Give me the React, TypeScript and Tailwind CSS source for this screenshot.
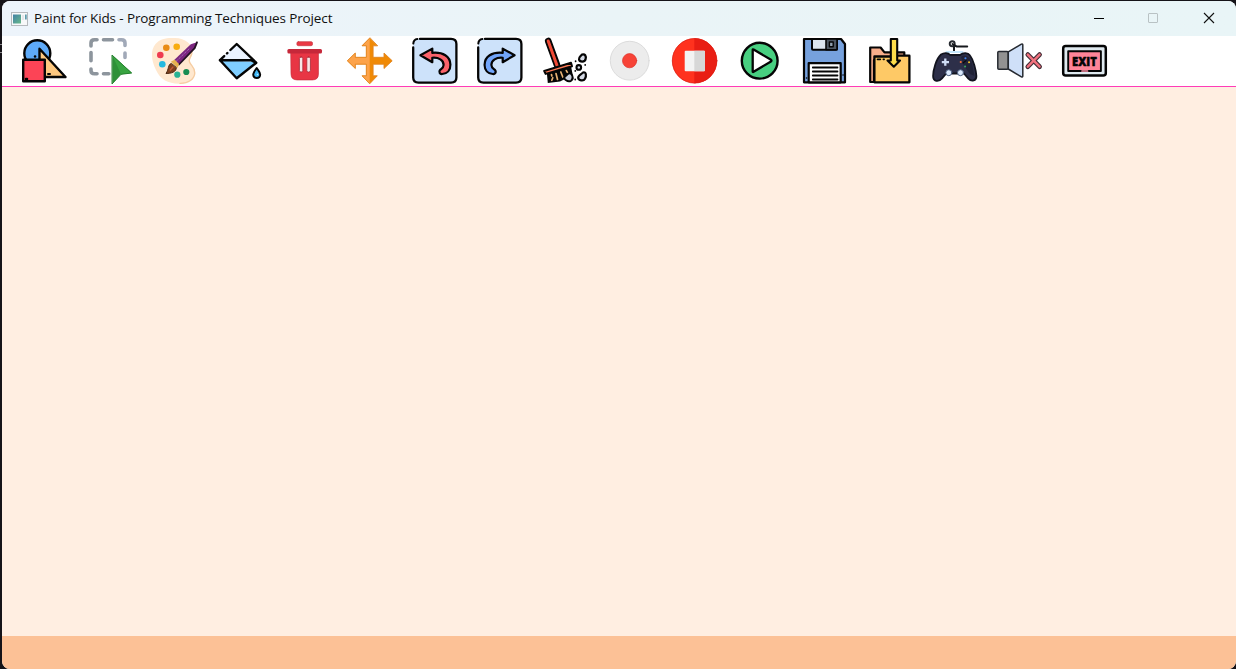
import type { ReactNode } from "react";

const K = "#050505";

function Icon({ label, children }: { label: string; children: ReactNode }) {
  return (
    <button type="button" aria-label={label} className="h-[50px] w-[65px] shrink-0">
      <svg viewBox="0 0 65 50" className="block h-[50px] w-[65px]" fill="none" strokeLinejoin="round" strokeLinecap="round">
        {children}
      </svg>
    </button>
  );
}

const turnArrow =
  "M30.3 12.6 L18.4 19.2 L30.3 26.2 L30.3 21.8 C36.5 21.2 41.8 24.2 41.6 29 C41.5 32 39.5 32.6 38 34 C36.4 36 38 38.4 40.2 38 C45 37.5 48.6 34 48.4 28.6 C48.2 20.5 41 15.8 30.3 16.8 Z";

function Shapes() {
  return (
    <Icon label="Shapes">
      <circle cx="25.3" cy="17.3" r="13" fill="#5eaaf8" stroke={K} strokeWidth="2.4" />
      <path d="M27.5 12.8 L53.5 41 H27.5 Z" fill="#fdc880" stroke={K} strokeWidth="2.4" />
      <path d="M36 38 h2" stroke={K} strokeWidth="2" />
      <rect x="11.2" y="23.8" width="21.6" height="21.4" fill="#fc4456" stroke={K} strokeWidth="2.4" />
      <path d="M14 43 h1 M23 20.5 h.1" stroke={K} strokeWidth="2.6" />
    </Icon>
  );
}

function Select() {
  return (
    <Icon label="Select">
      <g stroke="#8d959d" strokeWidth="3.6">
        <path d="M14 10 V7 Q14 3.7 17.5 3.7 H20 M26.5 3.7 H35.5 M14 16.5 V24.8 M14 33 V34.5 Q14 37.8 17.5 37.8 H20 M26.5 37.8 H31.8" />
        <path d="M42 3.7 H44.5 Q48 3.7 48 7 V9.5 M48 17 V21.5" stroke="#a1a9b8" />
      </g>
      <path d="M35.3 19.3 L54.7 37 L44 38.3 L35.3 47.7 Z" fill="#2e9138" />
      <path d="M35.3 19.3 L44 38.3 L54.7 37 Z" fill="#38a441" />
      <path d="M35.3 19.3 L54.7 37 L44 38.3 L35.3 47.7 Z" stroke="#25812e" strokeWidth="1" />
    </Icon>
  );
}

function Palette() {
  return (
    <Icon label="Drawing colour">
      <path d="M31 2 C42 1 51 8 50.5 16 C50.3 22 46 22 47.5 26 C49 30 53 31 52.8 37 C52.5 43 46.5 47.6 38 47.6 C27 48 18.5 44 14 34 C9 24 8.4 14 13.5 8 C18 3 24 1.8 31 2Z" fill="#ffe8cf" />
      <path d="M50 15 C50 22 46 22 47.5 26 C49 30 53 31 52.8 37 C52.5 43 46.5 47.6 38 47.4" stroke="#f6cda2" strokeWidth="1.4" />
      <circle cx="24.3" cy="11.7" r="3.3" fill="#e98b14" />
      <circle cx="34.7" cy="10.7" r="3.3" fill="#f8ac0f" />
      <circle cx="18.3" cy="19" r="3.3" fill="#ee3b50" />
      <circle cx="20.3" cy="28.3" r="3.3" fill="#26b9de" />
      <circle cx="35.3" cy="38.7" r="3.1" fill="#28b394" />
      <circle cx="44.3" cy="36" r="3.1" fill="#188d52" />
      <path d="M54.8 6.3 L48.8 8.2 L32.2 24 L36.5 29 L52.5 12.2 Z" fill="#7b267f" />
      <path d="M55 6.3 L52.7 12.2 L37 28.5" stroke="#241323" strokeWidth="1.8" />
      <path d="M34 25.5 L48 12" stroke="#a66ab7" strokeWidth="1" strokeDasharray="2 2" />
      <path d="M29 25.5 L35.5 32 L37 28 L32.8 23.8Z" fill="#e6b24f" />
      <path d="M29 27.5 C25.5 29 27.2 33 24 37.5 C29 37.5 34.5 36 34.3 31.8 Z" fill="#80401d" stroke="#4c2811" strokeWidth="1" />
      <path d="M28.3 34 L31 31" stroke="#c35a37" strokeWidth="1.3" />
    </Icon>
  );
}

function Fill() {
  return (
    <Icon label="Fill colour">
      <path d="M13 24.2 L29.7 8 L49.3 26.5 L29.7 42.2 Z" fill="#eaf3ff" />
      <path d="M13 24.2 L49.3 26 L29.7 42.2 Z" fill="#7fceff" />
      <path d="M29.7 42.2 L13 24.2 H44 L49.3 26.8 Z" stroke={K} strokeWidth="2.4" />
      <path d="M20 17.4 L20.4 17 M23.4 14 L29.7 8 L48.5 26" stroke={K} strokeWidth="2.4" />
      <path d="M13 24.2 L17.2 20.1" stroke={K} strokeWidth="2.4" />
      <path d="M49.7 32 C47.5 35 46.2 37 46.2 38.6 C46.2 41 48 42 49.8 42 C52 42 53.3 40.5 53.2 38.5 C53 36 51.5 35 49.7 32Z" fill="#43b7f4" stroke={K} strokeWidth="1.9" />
      <path d="M50.5 38.5 v.1" stroke="#c7efff" strokeWidth="1.5" />
    </Icon>
  );
}

function Trash() {
  return (
    <Icon label="Delete">
      <rect x="24.9" y="5.7" width="15.6" height="4" rx="1.4" fill="#eb3844" stroke="#c83b43" strokeWidth=".7" />
      <path d="M19 16 H46.4 V38 Q46.4 43.9 40.5 43.9 H25 Q19 43.9 19 38 Z" fill="#e83544" stroke="#c92b39" strokeWidth=".7" />
      <rect x="15.4" y="13" width="34.6" height="4.4" rx="1.5" fill="#c6283a" />
      <rect x="27.4" y="21" width="3.4" height="15" rx="1.6" fill="#f7e6e8" stroke="#a72836" strokeWidth=".8" />
      <rect x="34.8" y="21" width="3.6" height="15" rx="1.6" fill="#f7e6e8" stroke="#a72836" strokeWidth=".8" />
    </Icon>
  );
}

function Move() {
  return (
    <Icon label="Move">
      <path d="M32.7 2 L25 9.8 H29.3 V21.3 H18.3 V17 L10.3 24.8 L18.3 32.5 V28.2 H29.3 V39.8 H25 L32.7 47.8 L40.3 39.8 H36.1 V28.2 H47 V32.5 L55.2 24.8 L47 17 V21.3 H36.1 V9.8 H40.3 Z" fill="#f08a05" />
      <path d="M32.7 2 L25 9.8 H29.3 V21.3 H18.3 V17 L10.3 24.8 L18.3 32.5 V28.2 H29.3 V39.8 H25 L32.7 47.8 Z" fill="#fda34a" />
      <path d="M32.7 2 L25 9.8 H29.3 V21.3 H18.3 V17 L10.3 24.8 L18.3 32.5 V28.2 H29.3 V39.8 H25 L32.7 47.8 L40.3 39.8 H36.1 V28.2 H47 V32.5 L55.2 24.8 L47 17 V21.3 H36.1 V9.8 H40.3 Z" stroke="#e18520" strokeWidth=".9" />
    </Icon>
  );
}

function TurnTile() {
  return (
    <>
      <rect x="11.2" y="2.9" width="43.2" height="43.8" rx="5" fill="#cde2fa" />
      <path d="M18 2.9 H49 Q54.4 2.9 54.4 8 V41.6 Q54.4 46.7 49 46.7 H16.5 Q11.2 46.7 11.2 41.6 V11.5" stroke={K} strokeWidth="2.3" />
      <path d="M11.3 7.6 Q11.6 3.6 15.4 3.1" stroke={K} strokeWidth="2" />
    </>
  );
}

function Undo() {
  return (
    <Icon label="Undo">
      <TurnTile />
      <path d={turnArrow} fill="#fb626a" stroke={K} strokeWidth="2.2" />
    </Icon>
  );
}

function Redo() {
  return (
    <Icon label="Redo">
      <TurnTile />
      <g transform="translate(66 0) scale(-1 1)">
        <path d={turnArrow} fill="#71a5fa" stroke={K} strokeWidth="2.2" />
      </g>
    </Icon>
  );
}

function Broom() {
  return (
    <Icon label="Clear all">
      <path d="M16.2 5 L25 29" stroke={K} strokeWidth="6.6" />
      <path d="M16.2 5 L25.2 30" stroke="#f04a36" strokeWidth="3" />
      <path d="M14.8 36.5 L39 30 L41.5 43 L37 45 L33 43 L28 45.5 L15.8 47 Z" fill={K} />
      <path d="M19.5 38.5 l.3 1.5 M19.8 44.3 l1-2.6 M24 37.5 l1.5 6 M28.8 36 l2 5 M34.3 34.6 l1.2 2" stroke="#e8b173" strokeWidth="1.7" />
      <path d="M12.2 35 L39 26.8 L40 30.2 L13.6 37.9 Z" fill="#fa7854" stroke={K} strokeWidth="2" />
      <path d="M36.5 37.5 C40.5 36.5 42 43 39 44.8 C35.5 46.5 31.5 43 32.5 41Z" fill="#c9cedb" stroke={K} strokeWidth="1.9" />
      <path d="M50 18.5 C53 17.5 54.3 20 53.6 23 C53 26.5 47.5 26.3 47 23.3 C46.8 21 48.5 20.5 50 18.5Z" fill="#d5dae5" stroke={K} strokeWidth="2.2" />
      <circle cx="46.8" cy="31.4" r="2.3" fill="#d4d8e3" stroke={K} strokeWidth="2.1" />
      <path d="M51 36.5 C54.4 35.5 54.5 40 53 42.8 C51.5 45.5 46.5 44.5 46.2 41.8 C46 39.5 48.8 38.5 51 36.5Z" fill="#d5dae5" stroke={K} strokeWidth="2.2" />
      <path d="M43.6 25.2 v.1 M53.2 28.8 v.1 M43.3 34.8 v.1 M43.2 43.5 v.1" stroke={K} strokeWidth="1.8" />
    </Icon>
  );
}

function Record() {
  return (
    <Icon label="Start recording">
      <circle cx="32.7" cy="24.7" r="19.4" fill="#ececec" stroke="#dcdcdc" strokeWidth="1" />
      <circle cx="32.6" cy="24.7" r="7.1" fill="#f74337" stroke="#dd3028" strokeWidth=".7" />
    </Icon>
  );
}

function Stop() {
  return (
    <Icon label="Stop recording">
      <circle cx="32.6" cy="24.8" r="22.5" fill="#ff321e" />
      <path d="M32.3 2.3 A22.5 22.5 0 0 1 32.3 47.3 Z" fill="#e91e14" />
      <circle cx="32.6" cy="24.8" r="22.3" stroke="#d91e14" strokeWidth=".7" />
      <rect x="22.7" y="14.8" width="20.3" height="20.4" rx="1" fill="#f3f3f3" />
      <path d="M32.3 14.8 H42.2 Q43 14.8 43 15.8 V34.2 Q43 35.2 42 35.2 H32.3Z" fill="#d7d7d7" />
    </Icon>
  );
}

function Play() {
  return (
    <Icon label="Play recording">
      <circle cx="32.7" cy="24.7" r="17.9" fill="#48cf80" stroke={K} strokeWidth="2.4" />
      <path d="M25.7 13.8 Q25.7 13 26.6 13.5 L44 23.8 Q45 24.6 44 25.4 L26.6 35.8 Q25.7 36.3 25.7 35.4Z" fill="#fff" stroke={K} strokeWidth="2.3" />
    </Icon>
  );
}

function Save() {
  return (
    <Icon label="Save">
      <path d="M12 3 H49 L53 8 V46.3 H12 Z" fill="#76a1dd" stroke={K} strokeWidth="2.2" />
      <rect x="20" y="2.9" width="25" height="10.8" rx="1" fill="#dde5ee" stroke={K} strokeWidth="2" />
      <path d="M34 3 H45 V13.7 H34Z" fill="#4d5660" stroke={K} strokeWidth="1.6" />
      <rect x="37.4" y="6" width="3.8" height="4.8" fill="#91a0ae" stroke={K} strokeWidth="1.4" />
      <rect x="16.7" y="27.2" width="32" height="19.1" fill="#fff" stroke={K} strokeWidth="2.2" />
      <path d="M20.8 31.5 H45.5 M20.8 35.5 H45.5 M20.8 39.5 H45.5 M20.8 43.5 H45.5" stroke={K} strokeWidth="1.8" />
      <path d="M14.5 42 h.1 M51 39 h.1" stroke={K} strokeWidth="1.5" />
    </Icon>
  );
}

function Load() {
  return (
    <Icon label="Load">
      <path d="M13.2 46 V11.5 H23.6 L27.5 16.4 H47.3 V24 H17 V46 Z" fill="#f8ad8b" stroke={K} strokeWidth="2.2" />
      <path d="M17.4 46.3 V20.5 H36 L38 19.7 H52.4 V46.3 Z" fill="#fec966" stroke={K} strokeWidth="2.3" />
      <path d="M20.5 23.3 h2.8 M26.4 23.3 h.7" stroke={K} strokeWidth="1.7" />
      <path d="M33.8 3 H40.2 V24.5 H43 L36.8 30.7 L30.5 24.5 H33.8 Z" fill="#fedd4b" stroke={K} strokeWidth="2.1" />
    </Icon>
  );
}

function GameMode() {
  return (
    <Icon label="Play mode">
      <circle cx="30.2" cy="7.8" r="2.5" stroke="#26292f" strokeWidth="1.9" />
      <path d="M30.5 8 L34.5 10.4 H45.2 M32 11 V14.5" stroke="#16181c" strokeWidth="2" />
      <path d="M24.5 16 H40.5" stroke="#c5e7fc" strokeWidth="2" />
      <path d="M19 18.5 C22 16.5 26 16.5 28.2 19 H38 C41 16.5 46 16.5 48 19.5 C51.5 24 54 34 54.4 40 C54.5 45 49.5 46 46.4 42.7 L42 37.5 H24.2 L20 42.3 C16.5 46.3 11 45.7 11.1 40 C11.2 34 14 23 19 18.5Z" fill="#2d2f49" stroke="#12141f" strokeWidth="1.8" />
      <path d="M39 21 C42 18 48 20 50 27 L52.5 40 L48 38 L42 30Z" fill="#212338" />
      <path d="M23.3 22.5 V29.7 M19.8 26.2 H27" stroke="#cfdcf5" strokeWidth="2.3" strokeLinecap="butt" />
      <circle cx="26.8" cy="36.7" r="3" fill="#dceafd" stroke="#4c5f80" strokeWidth="1" />
      <circle cx="38.5" cy="36.7" r="3" fill="#dceafd" stroke="#4c5f80" strokeWidth="1" />
      <path d="M38.7 26 h.1" stroke="#fa7136" strokeWidth="2" />
      <path d="M43.4 22.3 h.1" stroke="#3f83ec" strokeWidth="2" />
      <path d="M47 26.3 h.1" stroke="#e9bd28" strokeWidth="2" />
      <path d="M43 30.6 h.1" stroke="#3aa45d" strokeWidth="2" />
      <path d="M41 27 l3-2.4" stroke="#08090d" strokeWidth="1.2" />
    </Icon>
  );
}

function Mute() {
  return (
    <Icon label="Mute">
      <rect x="10.8" y="15.6" width="10.4" height="17.6" rx="1" fill="#929292" stroke="#262a31" strokeWidth="1.5" />
      <path d="M21.3 15.8 L34.4 8.2 Q35.8 7.5 35.8 9 V40 Q35.8 41.5 34.4 40.8 L21.3 33 Z" fill="#cfe0f8" stroke="#262a31" strokeWidth="1.5" />
      <path d="M40.8 18.6 L52.6 30.7 M52.6 18.6 L40.8 30.7" stroke="#422d36" strokeWidth="4.7" />
      <path d="M40.8 18.6 L52.6 30.7 M52.6 18.6 L40.8 30.7" stroke="#f1717e" strokeWidth="2.4" />
    </Icon>
  );
}

function Exit() {
  return (
    <Icon label="Exit">
      <rect x="11.2" y="10.1" width="42.6" height="29.5" rx="2.5" fill="#dfe9ef" stroke={K} strokeWidth="2.5" />
      <rect x="16.2" y="15.2" width="32.7" height="19.8" fill="#ff8498" stroke={K} strokeWidth="1.9" />
      <text x="20" y="29.5" textLength="24.8" lengthAdjust="spacingAndGlyphs" fill={K} stroke={K} strokeWidth=".5" className="font-['Open_Sans',sans-serif] text-[13px] font-extrabold">EXIT</text>
      <path d="M30 35 h5.5" stroke="#ff8ea4" strokeWidth="1.7" />
    </Icon>
  );
}

function TitleBar() {
  return (
    <header className="flex h-[35px] shrink-0 items-center bg-linear-to-r from-[#edf4fb] via-[#eaf4f7] to-[#e9f5f7] pl-[9px]">
      <svg viewBox="0 0 17 14" className="h-[14px] w-[17px] shrink-0">
        <defs>
          <linearGradient id="app" x1="0" y1="0" x2="1" y2="1">
            <stop offset="0" stopColor="#4381a6" />
            <stop offset="1" stopColor="#67b98a" />
          </linearGradient>
        </defs>
        <rect x=".5" y=".5" width="16" height="13" fill="#f7f8f9" stroke="#b5b9bd" />
        <rect x="2" y="2.5" width="8" height="9" fill="url(#app)" />
        <path d="M11 3 H13 V8 H11Z" fill="#e4e7e9" />
        <rect x="14" y="2.5" width="1.7" height="5" fill="#5c9aab" />
      </svg>
      <h1 className="ml-[6px] flex-1 pb-px font-['Open_Sans',sans-serif] text-[13.5px] leading-[20px] tracking-[-0.125px] whitespace-nowrap text-[#101010]">
        Paint for Kids - Programming Techniques Project
      </h1>
      <div className="flex items-center">
        <button type="button" aria-label="Minimize" className="grid h-[35px] w-[54px] place-items-center pb-px">
          <svg viewBox="0 0 12 12" className="h-3 w-3"><path d="M1 6.5 H11" stroke="#000" /></svg>
        </button>
        <button type="button" aria-label="Maximize" className="grid h-[35px] w-[54px] place-items-center pb-px">
          <svg viewBox="0 0 12 12" className="h-3 w-3"><rect x="1.5" y="1.5" width="9" height="9" rx=".5" fill="none" stroke="#b9c2c4" /></svg>
        </button>
        <button type="button" aria-label="Close" className="grid h-[35px] w-[56px] place-items-center pl-[2px] pb-px">
          <svg viewBox="0 0 12 12" className="h-3 w-3"><path d="M1 1 L11 11 M11 1 L1 11" stroke="#111" strokeWidth="1.1" /></svg>
        </button>
      </div>
    </header>
  );
}

export default function App() {
  return (
    <div className="flex h-[669px] w-[1236px] overflow-hidden bg-[#151318] pt-px">
      <div className="flex w-[2px] shrink-0 flex-col gap-[7px] pt-[43px]">
        <div className="h-px bg-[#8b898c]" />
        <div className="h-px bg-[#8b898c]" />
      </div>
      <main className="flex h-[668px] flex-1 flex-col overflow-hidden rounded-[8px] bg-white">
        <TitleBar />
        <nav className="flex h-[51px] shrink-0 border-b border-[#ff3cb8] bg-white pl-[10px]">
          <Shapes />
          <Select />
          <Palette />
          <Fill />
          <Trash />
          <Move />
          <Undo />
          <Redo />
          <Broom />
          <Record />
          <Stop />
          <Play />
          <Save />
          <Load />
          <GameMode />
          <Mute />
          <Exit />
        </nav>
        <section className="flex-1 bg-[#ffeee1]" />
        <footer className="h-[33px] shrink-0 bg-[#fcc196]" />
      </main>
    </div>
  );
}
